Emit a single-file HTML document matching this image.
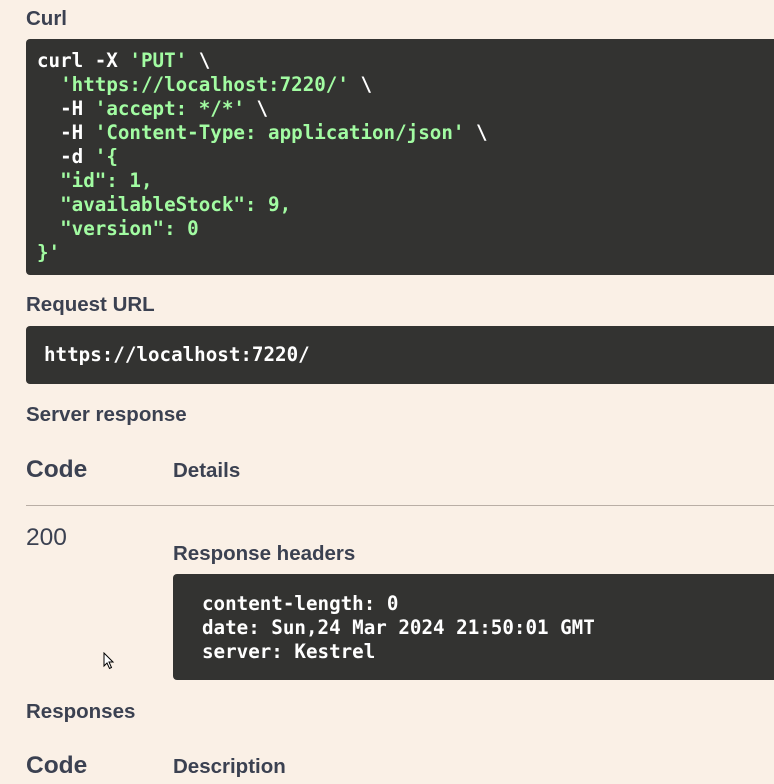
<!DOCTYPE html>
<html><head><style>
html,body{margin:0;padding:0;background:#faf0e6;width:774px;height:784px;overflow:hidden;font-family:"Liberation Sans",Arial,sans-serif;color:#3b4151;}
.h{position:absolute;font-weight:bold;font-size:20.5px;line-height:22px;}
.box{position:absolute;background:#333331;border-radius:4px;}
pre{margin:0;font-family:"DejaVu Sans Mono","Liberation Mono",monospace;font-weight:bold;font-size:19.2px;line-height:24px;color:#fff;white-space:pre;}
.g{color:#a2fca2;}
</style></head><body>
<div class="h" style="left:26px;top:8px;">Curl</div>
<div class="box" style="left:26px;top:39px;width:760px;height:236px;">
<pre style="position:absolute;left:11px;top:10px;">curl -X <span class="g">'PUT'</span> \
  <span class="g">'https://localhost:7220/'</span> \
  -H <span class="g">'accept: */*'</span> \
  -H <span class="g">'Content-Type: application/json'</span> \
  -d <span class="g">'{
  "id": 1,
  "availableStock": 9,
  "version": 0
}'</span></pre></div>
<div class="h" style="left:26px;top:294px;">Request URL</div>
<div class="box" style="left:26px;top:326px;width:760px;height:58px;">
<pre style="position:absolute;left:18px;top:17px;">https://localhost:7220/</pre></div>
<div class="h" style="left:26px;top:404px;">Server response</div>
<div class="h" style="left:26px;top:457px;font-size:24.5px;line-height:26px;">Code</div>
<div class="h" style="left:173px;top:460px;">Details</div>
<div style="position:absolute;left:26px;top:505px;width:760px;height:1px;background:#b9aea5;"></div>
<div style="position:absolute;left:26px;top:525px;font-size:24.5px;line-height:26px;">200</div>
<div class="h" style="left:173px;top:543px;">Response headers</div>
<div class="box" style="left:173px;top:574px;width:620px;height:106px;">
<pre style="position:absolute;left:29px;top:18px;">content-length: 0
date: Sun,24 Mar 2024 21:50:01 GMT
server: Kestrel</pre></div>
<svg style="position:absolute;left:103px;top:652px" width="12" height="18" viewBox="0 0 12 18"><path d="M1 1 L1 14 L4 11 L6.5 16.5 L8.5 15.5 L6 10 L10 10 Z" fill="#fff" stroke="#000" stroke-width="1"/></svg>
<div class="h" style="left:26px;top:701px;">Responses</div>
<div class="h" style="left:26px;top:753px;font-size:24.5px;line-height:26px;">Code</div>
<div class="h" style="left:173px;top:756px;">Description</div>
</body></html>
